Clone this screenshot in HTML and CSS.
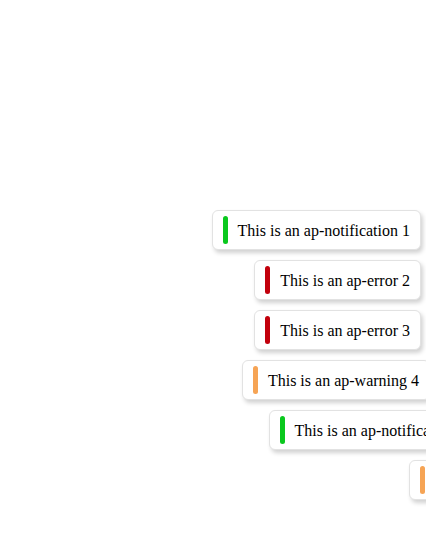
FILE: index.html
```html
<!DOCTYPE html>
<html>
<head>
<meta charset="utf-8">
<link rel="stylesheet" href="styles.css">
</head>
<body>
<div class="toasts">
  <div class="toast notification"><span class="bar"></span><span class="msg">This is an ap-notification 1</span></div>
  <div class="toast error"><span class="bar"></span><span class="msg">This is an ap-error 2</span></div>
  <div class="toast error"><span class="bar"></span><span class="msg">This is an ap-error 3</span></div>
  <div class="toast warning" style="transform: translateX(9px)"><span class="bar"></span><span class="msg">This is an ap-warning 4</span></div>
  <div class="toast notification" style="transform: translateX(57px)"><span class="bar"></span><span class="msg">This is an ap-notification 5</span></div>
  <div class="toast warning" style="transform: translateX(176px)"><span class="bar"></span><span class="msg">This is an ap-warning 6</span></div>
</div>
</body>
</html>
```
FILE: styles.css
```css
html, body {
  margin: 0;
  padding: 0;
  background: #fff;
  overflow: hidden;
}
body {
  width: 426px;
  height: 556px;
  font-family: "Liberation Serif", "Times New Roman", serif;
}
.toasts {
  display: flex;
  flex-direction: column;
  align-items: flex-end;
  gap: 10px;
  padding-top: 210px;
  padding-right: 5px;
}
.toast {
  display: flex;
  align-items: center;
  gap: 10px;
  padding: 5px 10px;
  border: 1px solid #e2e2e2;
  border-radius: 6px;
  background: #fff;
  box-shadow: 2px 3px 4px rgba(0, 0, 0, 0.18);
  white-space: nowrap;
  flex-shrink: 0;
}
.bar {
  width: 5px;
  height: 28px;
  border-radius: 3px;
  flex-shrink: 0;
}
.notification .bar { background: #0ac81e; }
.error .bar { background: #c2000c; }
.warning .bar { background: #f6a455; }
.msg {
  font-size: 16px;
  color: #000;
  padding-top: 2px;
}
```
